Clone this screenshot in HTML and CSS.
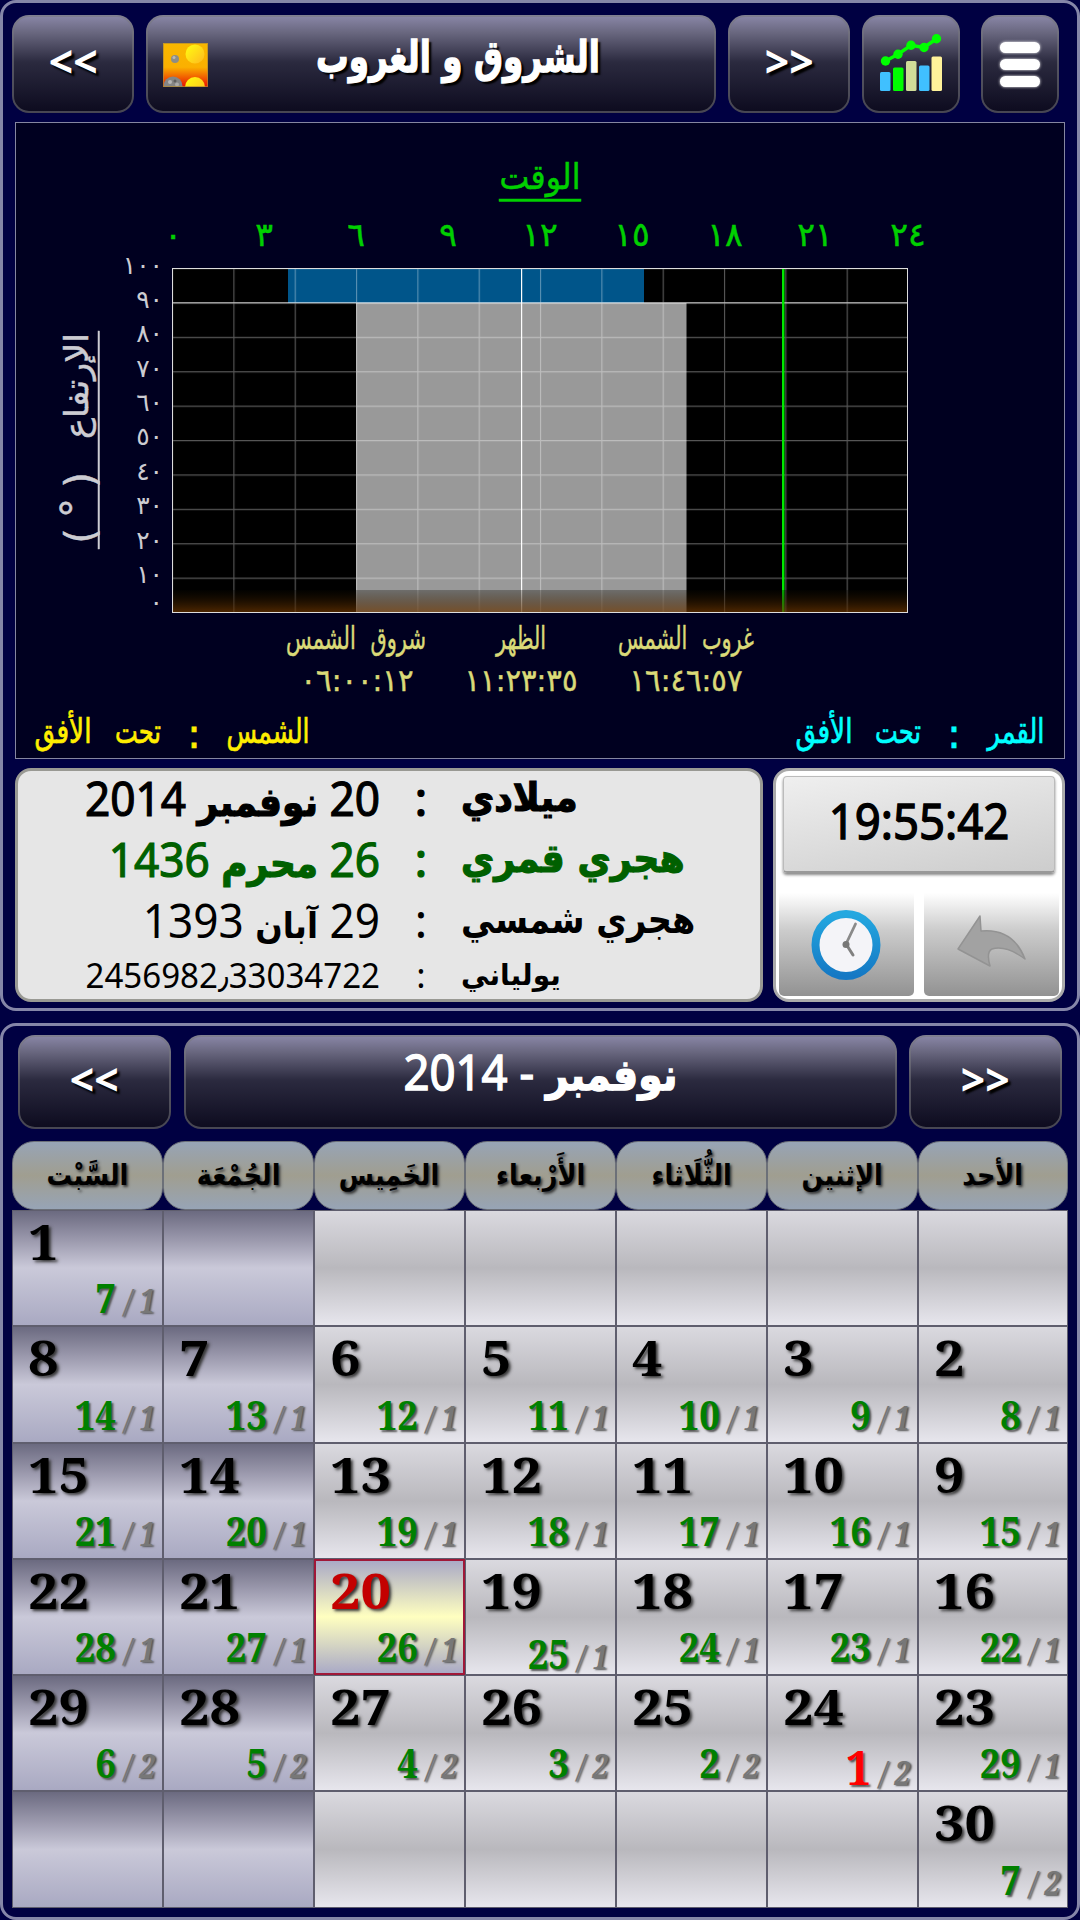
FILE: index.html
```
<!DOCTYPE html>
<html lang="ar">
<head>
    <meta charset="UTF-8">
    <meta name="viewport" content="width=device-width, initial-scale=1.0">
    <title>الشروق و الغروب</title>
    <link rel="stylesheet" href="styles.css">
</head>
<body>
    <section class="panel sun-panel">
        <div class="toolbar">
            <button class="btn btn-prev"><span class="arrows">&lt;&lt;</span></button>
            <button class="btn btn-title">
                <svg class="sun-icon" width="45" height="44" viewBox="0 0 45 44">
                    <defs>
                        <linearGradient id="sky" x1="0" y1="0" x2="0" y2="1">
                            <stop offset="0" stop-color="#f8b800"/>
                            <stop offset="0.55" stop-color="#fbb000"/>
                            <stop offset="1" stop-color="#e81000"/>
                        </linearGradient>
                        <linearGradient id="sun" x1="0" y1="0" x2="1" y2="1">
                            <stop offset="0" stop-color="#ffff10"/>
                            <stop offset="1" stop-color="#ffb820"/>
                        </linearGradient>
                        <clipPath id="frame"><rect width="45" height="44"/></clipPath>
                    </defs>
                    <g clip-path="url(#frame)">
                        <rect width="45" height="44" fill="url(#sky)"/>
                        <circle cx="32" cy="11" r="9.500" fill="url(#sun)"/>
                        <circle cx="32" cy="44" r="10" fill="url(#sun)"/>
                        <circle cx="12" cy="16" r="4" fill="#8d8d85"/>
                        <circle cx="11" cy="14.500" r="1.500" fill="#b9b9b4"/>
                        <circle cx="10" cy="43" r="9.500" fill="#858585"/>
                        <circle cx="7" cy="39" r="2" fill="#b5b5b5"/>
                        <circle cx="12" cy="38" r="1.500" fill="#5e5e5e"/>
                        <circle cx="14" cy="41.500" r="2" fill="#aaa"/>
                    </g>
                    <rect x=".5" y=".5" width="44" height="43" fill="none" stroke="#b08a30" stroke-opacity=".7"/>
                </svg>
                <span class="title-text" dir="rtl">الشروق و الغروب</span>
            </button>
            <button class="btn btn-next"><span class="arrows">&gt;&gt;</span></button>
            <button class="btn btn-stats">
                <svg width="66" height="60" viewBox="878 30 66 60">
                    <rect x="880" y="70" width="10.500" height="19" rx="1.500" fill="#40c0ff"/>
                    <rect x="893" y="65.500" width="10.500" height="23.500" rx="1.500" fill="#00ff00"/>
                    <rect x="906" y="59" width="10.500" height="30" rx="1.500" fill="#d0dc98"/>
                    <rect x="919" y="63.500" width="10.500" height="25.500" rx="1.500" fill="#40c0ff"/>
                    <rect x="931.500" y="54.500" width="10.500" height="34.500" rx="1.500" fill="#fff29a"/>
                    <polyline points="885.500,59 898,52.300 911,43.300 924,45.500 936.500,36.800" fill="none" stroke="#00ff00" stroke-width="3.500"/>
                    <g fill="#00ff00">
                        <circle cx="885.500" cy="59" r="4.700"/>
                        <circle cx="898" cy="52.300" r="4.700"/>
                        <circle cx="911" cy="43.300" r="4.700"/>
                        <circle cx="924" cy="45.500" r="4.700"/>
                        <circle cx="936.500" cy="36.800" r="4.700"/>
                    </g>
                </svg>
            </button>
            <button class="btn btn-menu"><i></i><i></i><i></i></button>
        </div>

        <svg class="chart" viewBox="15 122 1050 637">
            <defs>
                <linearGradient id="ground" x1="0" y1="0" x2="0" y2="1">
                    <stop offset="0" stop-color="#0a0800" stop-opacity=".3"/>
                    <stop offset="1" stop-color="#6b3500" stop-opacity=".72"/>
                </linearGradient>
                <!-- one cell is two hours by ten degrees -->
                <pattern id="grid" x="172" y="268" width="61.330" height="34.400" patternUnits="userSpaceOnUse">
                    <path d="M0.500 0V34.400M0 0.500H61.330" stroke="#fff" stroke-opacity=".34" stroke-width="1.300" fill="none"/>
                </pattern>
            </defs>

            <g class="hours">
                <text class="caption" x="540" y="189" textLength="81" lengthAdjust="spacingAndGlyphs">الوقت</text>
                <rect x="499" y="199" width="82" height="2.500"/>
                <text x="173" y="246">٠</text>
                <text x="264" y="246">٣</text>
                <text x="356" y="246">٦</text>
                <text x="448" y="246">٩</text>
                <text x="540" y="246">١٢</text>
                <text x="632" y="246">١٥</text>
                <text x="725" y="246">١٨</text>
                <text x="815" y="246">٢١</text>
                <text x="908" y="246">٢٤</text>
            </g>

            <g class="degrees">
                <text x="163" y="274">١٠٠</text>
                <text x="163" y="308">٩٠</text>
                <text x="163" y="342">٨٠</text>
                <text x="163" y="377">٧٠</text>
                <text x="163" y="411">٦٠</text>
                <text x="163" y="445">٥٠</text>
                <text x="163" y="480">٤٠</text>
                <text x="163" y="514">٣٠</text>
                <text x="163" y="549">٢٠</text>
                <text x="163" y="583">١٠</text>
                <text x="163" y="611">٠</text>
            </g>

            <g class="altitude" transform="translate(88 549) rotate(-90)">
                <text x="163" y="0" textLength="106" lengthAdjust="spacingAndGlyphs">الإرتفاع</text>
                <text x="69" y="6" class="paren">)</text>
                <text x="41" y="2" class="paren">°</text>
                <text x="13" y="6" class="paren">(</text>
                <rect x="0" y="10" width="218" height="1.500"/>
            </g>

            <rect x="172" y="268" width="736" height="344" fill="#000"/>
            <rect x="288" y="268" width="356" height="35" fill="#00558a"/>
            <rect x="356" y="303" width="330.500" height="309" fill="#999"/>
            <rect x="172" y="268" width="736" height="344" fill="url(#grid)"/>
            <rect x="172" y="302" width="736" height="1.500" fill="#fff" fill-opacity=".5"/>
            <rect x="521" y="268" width="1.200" height="344" fill="#fff"/>
            <rect x="782" y="268" width="2.500" height="344" fill="#00e800"/>
            <rect x="172" y="590" width="736" height="22" fill="url(#ground)"/>
            <rect x="172.500" y="268.500" width="735" height="344" fill="none" stroke="#ddd"/>

            <g class="events">
                <text x="356" y="649" textLength="140" lengthAdjust="spacingAndGlyphs">شروق الشمس</text>
                <text x="521" y="649" textLength="50" lengthAdjust="spacingAndGlyphs">الظهر</text>
                <text x="686" y="649" textLength="136" lengthAdjust="spacingAndGlyphs">غروب الشمس</text>
                <text x="357" y="691" textLength="113" lengthAdjust="spacingAndGlyphs">٠٦:٠٠:١٢</text>
                <text x="521" y="691" textLength="113" lengthAdjust="spacingAndGlyphs">١١:٢٣:٣٥</text>
                <text x="686" y="691" textLength="113" lengthAdjust="spacingAndGlyphs">١٦:٤٦:٥٧</text>
            </g>

            <g class="status sun">
                <text x="268" y="743" textLength="83" lengthAdjust="spacingAndGlyphs">الشمس</text>
                <text x="194" y="748" class="colon">:</text>
                <text x="138" y="743" textLength="46" lengthAdjust="spacingAndGlyphs">تحت</text>
                <text x="63" y="743" textLength="57" lengthAdjust="spacingAndGlyphs">الأفق</text>
            </g>
            <g class="status moon">
                <text x="1016" y="743" textLength="57" lengthAdjust="spacingAndGlyphs">القمر</text>
                <text x="954" y="748" class="colon">:</text>
                <text x="898" y="743" textLength="46" lengthAdjust="spacingAndGlyphs">تحت</text>
                <text x="824" y="743" textLength="57" lengthAdjust="spacingAndGlyphs">الأفق</text>
            </g>
        </svg>

        <div class="info">
            <div class="dates">
                <div class="date-row gregorian">
                    <span class="value" dir="rtl">20 <b>نوفمبر</b> 2014</span>
                    <span class="sep">:</span>
                    <span class="label" dir="rtl">ميلادي</span>
                </div>
                <div class="date-row hijri">
                    <span class="value" dir="rtl">26 <b>محرم</b> 1436</span>
                    <span class="sep">:</span>
                    <span class="label" dir="rtl">هجري قمري</span>
                </div>
                <div class="date-row persian">
                    <span class="value" dir="rtl">29 <b>آبان</b> 1393</span>
                    <span class="sep">:</span>
                    <span class="label" dir="rtl">هجري شمسي</span>
                </div>
                <div class="date-row julian">
                    <span class="value">2456982٫33034722</span>
                    <span class="sep">:</span>
                    <span class="label" dir="rtl">يولياني</span>
                </div>
            </div>

            <div class="clock">
                <button class="time"><span>19:55:42</span></button>
                <div class="clock-actions">
                    <button class="small-btn">
                        <svg width="72" height="74" viewBox="0 0 72 74">
                            <defs>
                                <linearGradient id="ring" x1="0" y1="0" x2="0" y2="1">
                                    <stop offset="0" stop-color="#24a8e0"/>
                                    <stop offset="1" stop-color="#1478c4"/>
                                </linearGradient>
                            </defs>
                            <ellipse cx="35" cy="37" rx="30.500" ry="31" fill="#f4f4f8" stroke="url(#ring)" stroke-width="8"/>
                            <path d="M35 36L44.500 16" stroke="#8a8a8a" stroke-width="2.800" stroke-linecap="round"/>
                            <path d="M35 36L42 47" stroke="#808080" stroke-width="3" stroke-linecap="round"/>
                            <circle cx="35" cy="36.500" r="3.500" fill="#777"/>
                        </svg>
                    </button>
                    <button class="small-btn">
                        <svg width="72" height="74" viewBox="0 0 72 74">
                            <path d="M24 8L2 41L34 58Q30 44 36 41Q50 37 69 51Q57 20 25 23Z" fill="#a2a2a2" stroke="#939393" stroke-width="1.500" stroke-linejoin="round"/>
                        </svg>
                    </button>
                </div>
            </div>
        </div>
    </section>

    <section class="panel month-panel">
        <div class="month-bar">
            <button class="btn month-nav"><span class="arrows">&lt;&lt;</span></button>
            <button class="btn month-title"><span dir="rtl"><b>نوفمبر</b> - 2014</span></button>
            <button class="btn month-nav"><span class="arrows">&gt;&gt;</span></button>
        </div>

        <div class="weekdays">
            <div><span>السَّبْت</span></div>
            <div><span>الجُمْعَة</span></div>
            <div><span>الخَمِيس</span></div>
            <div><span>الأَرْبعاء</span></div>
            <div><span>الثُّلَاثاء</span></div>
            <div><span>الإثنين</span></div>
            <div><span>الأحد</span></div>
        </div>

        <div class="days">
            <div class="day off"><b>1</b><p><span>7</span><i>/</i><em>1</em></p></div>
            <div class="day off"></div>
            <div class="day"></div>
            <div class="day"></div>
            <div class="day"></div>
            <div class="day"></div>
            <div class="day"></div>

            <div class="day off"><b>8</b><p><span>14</span><i>/</i><em>1</em></p></div>
            <div class="day off"><b>7</b><p><span>13</span><i>/</i><em>1</em></p></div>
            <div class="day"><b>6</b><p><span>12</span><i>/</i><em>1</em></p></div>
            <div class="day"><b>5</b><p><span>11</span><i>/</i><em>1</em></p></div>
            <div class="day"><b>4</b><p><span>10</span><i>/</i><em>1</em></p></div>
            <div class="day"><b>3</b><p><span>9</span><i>/</i><em>1</em></p></div>
            <div class="day"><b>2</b><p><span>8</span><i>/</i><em>1</em></p></div>

            <div class="day off"><b>15</b><p><span>21</span><i>/</i><em>1</em></p></div>
            <div class="day off"><b>14</b><p><span>20</span><i>/</i><em>1</em></p></div>
            <div class="day"><b>13</b><p><span>19</span><i>/</i><em>1</em></p></div>
            <div class="day"><b>12</b><p><span>18</span><i>/</i><em>1</em></p></div>
            <div class="day"><b>11</b><p><span>17</span><i>/</i><em>1</em></p></div>
            <div class="day"><b>10</b><p><span>16</span><i>/</i><em>1</em></p></div>
            <div class="day"><b>9</b><p><span>15</span><i>/</i><em>1</em></p></div>

            <div class="day off"><b>22</b><p><span>28</span><i>/</i><em>1</em></p></div>
            <div class="day off"><b>21</b><p><span>27</span><i>/</i><em>1</em></p></div>
            <div class="day today"><b>20</b><p><span>26</span><i>/</i><em>1</em></p></div>
            <div class="day low"><b>19</b><p><span>25</span><i>/</i><em>1</em></p></div>
            <div class="day"><b>18</b><p><span>24</span><i>/</i><em>1</em></p></div>
            <div class="day"><b>17</b><p><span>23</span><i>/</i><em>1</em></p></div>
            <div class="day"><b>16</b><p><span>22</span><i>/</i><em>1</em></p></div>

            <div class="day off"><b>29</b><p><span>6</span><i>/</i><em>2</em></p></div>
            <div class="day off"><b>28</b><p><span>5</span><i>/</i><em>2</em></p></div>
            <div class="day"><b>27</b><p><span>4</span><i>/</i><em>2</em></p></div>
            <div class="day"><b>26</b><p><span>3</span><i>/</i><em>2</em></p></div>
            <div class="day"><b>25</b><p><span>2</span><i>/</i><em>2</em></p></div>
            <div class="day low first"><b>24</b><p><span>1</span><i>/</i><em>2</em></p></div>
            <div class="day"><b>23</b><p><span>29</span><i>/</i><em>1</em></p></div>

            <div class="day off"></div>
            <div class="day off"></div>
            <div class="day"></div>
            <div class="day"></div>
            <div class="day"></div>
            <div class="day"></div>
            <div class="day"><b>30</b><p><span>7</span><i>/</i><em>2</em></p></div>
        </div>
    </section>
</body>
</html>
```

FILE: styles.css
```
* {
    box-sizing: border-box;
}
body {
    margin: 0;
    width: 1080px;
    height: 1920px;
    overflow: hidden;
    background: #000042;
    font-family: 'Noto Sans', 'DejaVu Sans', sans-serif;
    color: #000;
}
button {
    margin: 0;
    padding: 0;
    border: none;
    font-family: inherit;
    color: #000;
    cursor: pointer;
}
.panel {
    border: 3px solid #8586a8;
    border-radius: 16px;
    background: #000042;
}
.sun-panel {
    height: 1011px;
    margin-bottom: 12px;
    padding: 12px 12px 0;
}
.month-panel {
    height: 897px;
    padding: 9px 9px 0;
}

/* glossy buttons */
.btn {
    display: flex;
    align-items: center;
    justify-content: center;
    border: 2px solid rgba(120, 120, 125, 0.55);
    border-radius: 17px;
    background: linear-gradient(#8b88a9 0%, #69677f 18%, #2b2a3f 48%, #0c0a1e 100%) border-box;
    color: #fff;
}
.arrows {
    display: block;
    margin-bottom: 7px;
    font-size: 44px;
    font-weight: 700;
    line-height: 50px;
    transform: scaleX(0.97);
    text-shadow: 3px 3px 2px #000;
}
.toolbar {
    display: flex;
    gap: 12px;
    height: 98px;
    margin-left: -3px;
}
.btn-prev, .btn-next {
    width: 122px;
}
.btn-title {
    width: 570px;
    justify-content: flex-start;
    padding-left: 15px;
}
.sun-icon {
    flex: none;
    margin-top: 2px;
}
.title-text {
    width: 410px;
    margin: 0 auto 14px 45px;
    font: bold 44px/50px 'DejaVu Sans', sans-serif;
    text-align: center;
    white-space: nowrap;
    transform: scaleX(0.74);
    -webkit-text-stroke: 1.3px #fff;
    text-shadow: 4px 3px 2px #000;
}
.btn-stats {
    width: 98px;
}
.btn-stats svg {
    margin-bottom: 5px;
}
.btn-menu {
    width: 78px;
    margin-left: 9px;
    flex-direction: column;
    gap: 6px;
}
.btn-menu i {
    width: 40px;
    height: 11px;
    border-radius: 6px;
    background: #fff;
    box-shadow: 0 0 3px #fff;
}

/* chart */
.chart {
    display: block;
    width: 1050px;
    height: 637px;
    margin-top: 9px;
    outline: 1px solid #8586a0;
    outline-offset: -1px;
    background: #000020;
    font-family: 'DejaVu Sans', sans-serif;
    text-anchor: middle;
}
.hours {
    fill: #00d000;
    stroke: #00d000;
    stroke-width: 0.5px;
    font-size: 33px;
}
.hours .caption {
    font-size: 35px;
}
.degrees {
    fill: #ccccd2;
    font-size: 25px;
    text-anchor: end;
}
.altitude {
    fill: #ccccd2;
    stroke: #ccccd2;
    stroke-width: 0.5px;
    font-size: 33px;
}
.altitude .paren {
    font-size: 40px;
}
.events {
    fill: #dada78;
    stroke: #dada78;
    stroke-width: 0.5px;
    font-size: 31px;
    word-spacing: 12px;
}
.status {
    stroke-width: 0.7px;
    font-size: 34px;
}
.status .colon {
    font-size: 40px;
}
.sun {
    fill: #ffee00;
    stroke: #ffee00;
}
.moon {
    fill: #00ffff;
    stroke: #00ffff;
}

/* dates and clock */
.info {
    display: flex;
    gap: 10px;
    height: 234px;
    margin-top: 9px;
}
.dates {
    width: 748px;
    border: 3px solid #999993;
    border-radius: 16px;
    background: #e6e6e6;
}
.date-row {
    display: grid;
    grid-template-columns: 362px 82px 1fr;
    height: 61px;
    font-size: 48px;
    line-height: 54px;
    white-space: nowrap;
    -webkit-text-stroke: 1.2px currentColor;
}
.date-row .value {
    text-align: right;
    transform: scaleX(0.92);
    transform-origin: right;
}
.date-row .sep {
    text-align: center;
}
.date-row .label, .date-row b {
    font-family: 'DejaVu Sans', sans-serif;
    font-weight: bold;
    font-size: 39px;
}
.date-row .label {
    justify-self: start;
    margin-left: -1px;
    transform: scaleX(0.93);
    transform-origin: left;
}
.hijri {
    color: #006000;
}
.hijri b {
    font-size: 39px;
}
.persian {
    -webkit-text-stroke: 0;
}
.persian b {
    font-size: 35px;
}
.persian .label {
    transform: scaleX(0.86);
}
.julian {
    height: 45px;
    font-size: 35px;
    line-height: 42px;
    -webkit-text-stroke: 0;
}
.julian .value {
    transform: scaleX(0.945);
}
.julian .label {
    font-size: 29px;
    transform: scaleX(0.97);
}
.clock {
    width: 292px;
    padding: 5px 3px 0;
    border: 3px solid #aaaaaa;
    border-radius: 16px;
    background: #fff;
}
.time {
    display: block;
    width: 272px;
    height: 97px;
    margin: 0 auto;
    border: 1px solid #bbb;
    border-bottom: 2px solid #999;
    border-radius: 4px;
    background: linear-gradient(170deg, #efefef, #cdcdcd);
    box-shadow: 0 2px 3px #888;
    font-size: 50px;
    -webkit-text-stroke: 1.4px #000;
}
.time span {
    display: block;
    margin-top: -8px;
    line-height: 90px;
    transform: scaleX(0.91);
}
.clock-actions {
    display: flex;
    gap: 10px;
    margin-top: 20px;
}
.small-btn {
    display: flex;
    flex: 1;
    align-items: center;
    justify-content: center;
    height: 103px;
    border-radius: 0 0 5px 5px;
    background: linear-gradient(#fff, #cccccc 36%, #929292);
}

/* month */
.month-bar {
    display: flex;
    justify-content: space-between;
    height: 94px;
    padding: 0 6px;
}
.month-nav {
    width: 153px;
}
.month-title {
    width: 713px;
    font-size: 50px;
    -webkit-text-stroke: 1.4px #fff;
}
.month-title span {
    line-height: 60px;
    margin-bottom: 19px;
    transform: scaleX(0.91);
}
.month-title b {
    font-family: 'DejaVu Sans', sans-serif;
    font-size: 43px;
}
.weekdays {
    display: grid;
    grid-template-columns: repeat(6, 151px) 150px;
    height: 69px;
    margin-top: 12px;
}
.weekdays div {
    display: flex;
    align-items: center;
    justify-content: center;
    border: 1px solid #6c7078;
    border-radius: 22px;
    background: linear-gradient(#97a4b6, #a09e90, #97a4b6);
}
.weekdays span {
    margin-bottom: 2px;
    font: bold 29px/40px 'DejaVu Sans', sans-serif;
    white-space: nowrap;
    transform: scaleX(0.88);
    text-shadow: 2px 2px 3px #333;
}
.days {
    display: grid;
    grid-template-columns: repeat(6, 151px) 150px;
    grid-auto-rows: 116.3px;
}
.day {
    display: flex;
    flex-direction: column;
    justify-content: space-between;
    border: 1px solid #5f5e6e;
    background: linear-gradient(#dad9df, #b9b8bd 50%, #e7e6ed);
    font-family: 'Noto Serif', 'DejaVu Serif', serif;
}
.day.off {
    background: linear-gradient(#6b6a80, #9a98ac 25%, #cac9d9 50%, #a9a9c2);
}
.day.today {
    border: 2px solid #a01838;
    background: linear-gradient(#aaaac6, #ffffc0 50%, #aaaac6);
}
.day b {
    align-self: flex-start;
    margin-left: 15px;
    font-size: 49px;
    line-height: 61px;
    transform: scaleX(1.1);
    transform-origin: left;
    text-shadow: 2px 2px 3px #333;
}
.day.today b {
    margin-left: 14px;
    line-height: 58px;
    color: #c40000;
}
.day p {
    display: flex;
    align-items: baseline;
    justify-content: flex-end;
    margin: 0 8px 4px 0;
    font-weight: bold;
    line-height: 40px;
}
.day.today p {
    margin: 0 7px 3px 0;
}
.day p span {
    margin-right: 2px;
    color: #008000;
    font-size: 39px;
    text-shadow: 2px 2px 2px #555;
    transform: scaleX(0.94);
    transform-origin: right;
}
.day i, .day em {
    width: 20px;
    color: #777;
    font-size: 33px;
    text-align: center;
    text-shadow: 2px 1px 2px #555;
}
.day i {
    font-size: 31px;
    transform: scaleX(0.8);
}
.day em {
    width: 16px;
    transform: scaleX(0.85);
}
.day.low p {
    margin-bottom: -3px;
}
.day.first p span {
    color: #ff0000;
    font-size: 48px;
}
```
